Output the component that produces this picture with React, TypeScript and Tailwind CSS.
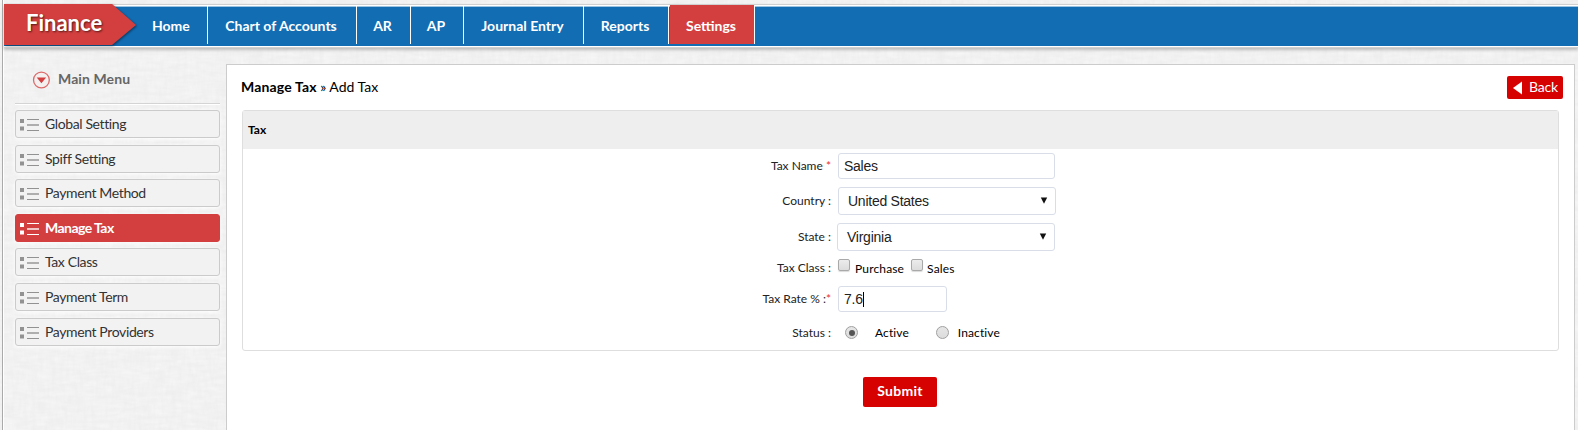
import React from "react";

const navItems = [
  { label: "Home", cell: "w-[57px]" },
  { label: "Chart of Accounts", cell: "w-[149px]" },
  { label: "AR", cell: "w-[54px]" },
  { label: "AP", cell: "w-[53px]" },
  { label: "Journal Entry", cell: "w-[120px]" },
  { label: "Reports", cell: "w-[85px]" },
];

const menuItems = [
  { label: "Global Setting", gap: "" },
  { label: "Spiff Setting", gap: "mt-[7px]" },
  { label: "Payment Method", gap: "mt-[6px]" },
  { label: "Manage Tax", gap: "mt-[7px]", active: true },
  { label: "Tax Class", gap: "mt-[6px]" },
  { label: "Payment Term", gap: "mt-[7px]" },
  { label: "Payment Providers", gap: "mt-[7px]" },
];

function LinenTexture() {
  return (
    <svg className="absolute inset-0 -z-10 h-full w-full" aria-hidden="true">
      <filter id="weft" x="0" y="0" width="100%" height="100%">
        <feTurbulence type="fractalNoise" baseFrequency="0.06 0.25" numOctaves="2" seed="4" />
        <feColorMatrix values="0 0 0 0 1  0 0 0 0 1  0 0 0 0 1  0.7 0 0 0 -0.2" />
      </filter>
      <filter id="warp" x="0" y="0" width="100%" height="100%">
        <feTurbulence type="fractalNoise" baseFrequency="0.25 0.06" numOctaves="2" seed="9" />
        <feColorMatrix values="0 0 0 0 0.82  0 0 0 0 0.82  0 0 0 0 0.82  0.8 0 0 0 -0.3" />
      </filter>
      <rect width="100%" height="100%" fill="#f0f0f0" />
      <rect width="100%" height="100%" filter="url(#weft)" />
      <rect width="100%" height="100%" filter="url(#warp)" />
    </svg>
  );
}

function ListIcon({ active }: { active?: boolean }) {
  const c = active ? "#ffffff" : "#929292";
  return (
    <svg width="20" height="14" viewBox="0 0 20 14" className="mt-[2px] block shrink-0" aria-hidden="true">
      <rect x="0" y="1" width="4" height="4" fill={c} />
      <rect x="0" y="8.5" width="4" height="4" fill={c} />
      <path d="M7 1.5h12M7 12.5h12" stroke={c} strokeWidth="1.1" />
      <path d="M7 7h12" stroke={c} strokeWidth="2" opacity="0.7" />
    </svg>
  );
}

function Row({ label, required, className, children }: { label: string; required?: boolean; className: string; children: React.ReactNode }) {
  return (
    <div className={`flex items-center ${className}`}>
      <div className="flex w-[588px] justify-end whitespace-pre text-[12px] text-[#222]">
        {label}
        {required && <span className="text-[#f03030]">*</span>}
      </div>
      {children}
    </div>
  );
}

function Select({ value, className }: { value: string; className: string }) {
  return (
    <div className={`flex h-[28px] items-center justify-between rounded-[3px] border border-[#d8dde8] bg-white pl-[9px] pr-[7px] font-['Liberation_Sans',sans-serif] text-[14px] tracking-[-0.25px] text-[#222] ${className}`}>
      <span className="mt-px">{value}</span>
      <svg width="8" height="7" viewBox="0 0 8 7" className="-mt-[2px]" aria-hidden="true">
        <path d="M0.8 0.5h6.4L4 6.8z" fill="#111" />
      </svg>
    </div>
  );
}

function Checkbox({ className }: { className: string }) {
  return <span className={`size-[12px] rounded-[2px] border border-[#a9a9a9] bg-linear-to-b from-[#ececec] to-[#dcdcdc] shadow-[0_1px_1px_rgba(0,0,0,0.15)] ${className}`} />;
}

function Radio({ checked, className }: { checked?: boolean; className: string }) {
  return (
    <span className={`flex size-[13px] items-center justify-center rounded-full border border-[#a0a0a0] bg-linear-to-b from-[#e6e6e6] to-[#dcdcdc] ${className}`}>
      {checked && <span className="size-[6px] rounded-full bg-[#555]" />}
    </span>
  );
}

export default function App() {
  return (
    <div className="relative isolate flex h-[430px] w-[1578px] overflow-hidden font-[Lato,sans-serif]">
      <LinenTexture />
      <div className="w-[4px] shrink-0 border-r border-white">
        <div className="ml-[2px] h-full w-px bg-[#aaa]" />
      </div>
      <div className="flex min-w-0 flex-1 flex-col">
        <header className="mt-[4px] flex h-[44px] shrink-0 flex-col border-b border-t border-[#d0d0d0] bg-white pb-px pt-px shadow-[0_2px_3px_rgba(0,0,0,0.22)]">
          <div className="flex h-[40px] border-t border-[#9cc3df] bg-[#126db3]">
            <div className="relative -mt-[3px] h-[42px] w-[147px] shrink-0">
              <svg width="136" height="44" viewBox="0 0 136 44" className="absolute left-0 top-0 overflow-visible" aria-hidden="true">
                <path d="M0 0H108L132 21L108 41H0z" fill="#d33f3f" className="drop-shadow-[1px_1px_1px_rgba(0,0,0,0.45)]" />
              </svg>
              <div className="relative pl-[22px] pt-[4px] text-[22px] font-bold leading-[30px] text-white [text-shadow:1px_1px_2px_rgba(0,0,0,0.6)]">Finance</div>
            </div>
            <nav className="-mt-px flex h-[38px] text-[14px] font-bold leading-[40px] text-white">
              {navItems.map((item) => (
                <div key={item.label} className={`flex border-r border-white whitespace-nowrap ${item.cell} ${item.label === "Home" ? "justify-start pl-px" : "justify-center pr-[2px]"}`}>
                  {item.label}
                </div>
              ))}
              <div className="-mt-px ml-px flex h-[39px] w-[85px] justify-center border-r border-white bg-[#d33f3f] pr-[2px] pt-px">Settings</div>
            </nav>
          </div>
        </header>
        <div className="flex flex-1">
          <aside className="w-[222px] shrink-0 pl-[11px] pr-[6px]">
            <div className="flex h-[56px] items-center border-b border-[#d4d4d4] pb-[2px] pl-[17px] shadow-[0_1px_0_#fff]">
              <svg width="18" height="18" viewBox="0 0 18 18" className="mt-[11px]" aria-hidden="true">
                <circle cx="9.4" cy="9" r="7.9" fill="#f5f0f0" stroke="#dc6a6a" strokeWidth="1.3" />
                <path d="M4.7 6.6h9.4L9.4 12.2z" fill="#d33f3f" />
              </svg>
              <span className="ml-[8px] mt-[7px] text-[14px] font-bold tracking-[0.1px] text-[#666]">Main Menu</span>
            </div>
            <ul className="mt-[6px]">
              {menuItems.map((item) => (
                <li
                  key={item.label}
                  className={`flex h-[28px] items-center rounded-[3px] border pl-[4px] text-[14px] shadow-[0_1px_4px_#fff] ${item.gap} ${
                    item.active
                      ? "border-[#d33f3f] bg-[#d33f3f] font-bold tracking-[-0.55px] text-white"
                      : "border-[#cbcbcb] bg-[#f2f2f2] tracking-[-0.38px] text-[#333]"
                  }`}
                >
                  <ListIcon active={item.active} />
                  <span className="-mt-[2px] ml-[5px]">{item.label}</span>
                </li>
              ))}
            </ul>
          </aside>
          <main className="mt-[16px] w-[1349px] border border-b-0 border-[#ccc] bg-white pl-[15px] pr-[15px]">
            <div className="flex h-[45px] items-start justify-between">
              <div className="-ml-px mt-[13px] text-[14px] leading-[18px] text-black">
                <b className="tracking-[0.15px]">Manage Tax</b> » Add Tax
              </div>
              <div className="-mr-[4px] mt-[11px] flex h-[23px] w-[56px] items-center rounded-[2px] bg-[#d60202] pl-[6px] text-[14px] text-white">
                <svg width="9" height="14" viewBox="0 0 9 14" aria-hidden="true">
                  <path d="M0 7L9 0.5V13.5z" fill="#fff" />
                </svg>
                <span className="-mt-[2px] ml-[7px] tracking-[-0.2px]">Back</span>
              </div>
            </div>
            <section className="h-[241px] w-[1317px] rounded-[3px] border border-[#dedede]">
              <div className="flex h-[38px] items-center bg-[#eee] pl-[5px] text-[12px] font-bold text-black">Tax</div>
              <Row label="Tax Name " required className="mt-[4px] h-[26px]">
                <div className="ml-[7px] flex h-[26px] w-[217px] items-center rounded-[3px] border border-[#d8dde8] pl-[5px] font-['Liberation_Sans',sans-serif] text-[14px] tracking-[-0.25px] text-[#222]">Sales</div>
              </Row>
              <Row label="Country :" className="mt-[8px] h-[28px]">
                <Select value="United States" className="ml-[7px] w-[218px]" />
              </Row>
              <Row label="State :" className="mt-[8px] h-[28px]">
                <Select value="Virginia" className="ml-[6px] w-[218px]" />
              </Row>
              <Row label="Tax Class :" className="mt-[8px] h-[18px] text-[12px]">
                <Checkbox className="-mt-[6px] ml-[7px]" />
                <span className="ml-[5px] mt-px tracking-[0.15px]">Purchase</span>
                <Checkbox className="-mt-[6px] ml-[7px]" />
                <span className="ml-[4px] mt-px tracking-[0.15px]">Sales</span>
              </Row>
              <Row label="Tax Rate % :" required className="mt-[9px] h-[26px]">
                <div className="ml-[7px] flex h-[26px] w-[109px] items-center rounded-[3px] border border-[#d8dde8] pl-[5px] font-['Liberation_Sans',sans-serif] text-[14px] tracking-[-0.25px] text-[#222]">
                  7.6
                  <span className="h-[15px] w-px bg-black" />
                </div>
              </Row>
              <Row label="Status :" className="mt-[12px] h-[18px] text-[12px]">
                <Radio checked className="-mt-px ml-[14px]" />
                <span className="ml-[17px] tracking-[0.1px]">Active</span>
                <Radio className="-mt-px ml-[27px]" />
                <span className="ml-[9px] tracking-[0.1px]">Inactive</span>
              </Row>
            </section>
            <div className="ml-[621px] mt-[26px] flex h-[30px] w-[74px] items-center justify-center rounded-[2px] bg-[#d60202] pb-[3px] text-[14px] font-bold tracking-[0.25px] text-white">Submit</div>
          </main>
        </div>
      </div>
    </div>
  );
}
